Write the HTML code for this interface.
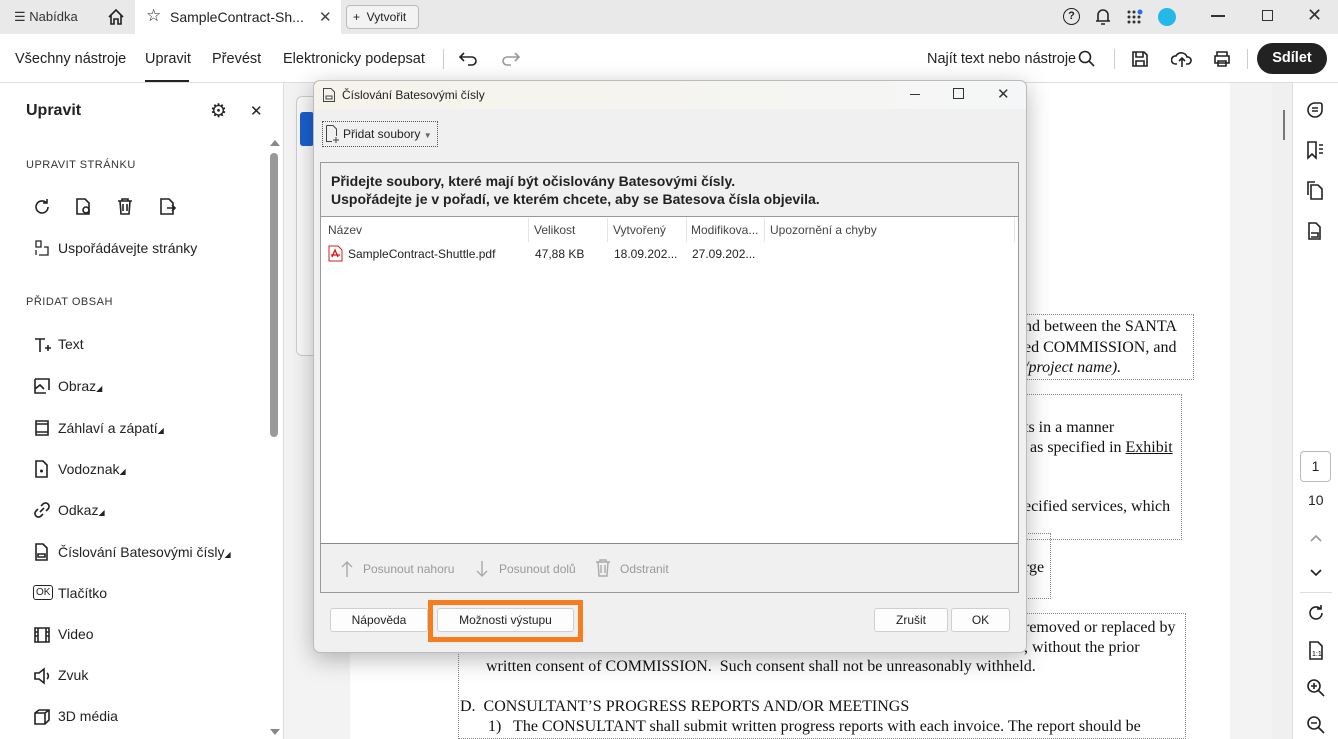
<!DOCTYPE html>
<html><head><meta charset="utf-8"><style>
*{box-sizing:border-box;margin:0;padding:0}
body{width:1338px;height:739px;overflow:hidden;position:relative;font-family:"Liberation Sans",sans-serif;color:#222;background:#fff}
.a{position:absolute}
.ser{font-family:"Liberation Serif",serif;font-size:16px;color:#111;white-space:nowrap}
.ic{fill:none;stroke:#222;stroke-width:1.6}
.li{position:absolute;left:58px;font-size:14px}
.lic{position:absolute;left:33px}
.sec{position:absolute;left:26px;font-size:11px;letter-spacing:.5px;color:#333}
.btn{position:absolute;background:#fdfdfd;border:1px solid #cfcfcf;border-radius:3px;font-size:12px;text-align:center;line-height:22px;height:24px}
</style></head><body>
<!-- top bar -->
<div class="a" style="left:0;top:0;width:1338px;height:34px;background:#e9e9e9"></div>
<div class="a" style="left:135px;top:0;width:206px;height:34px;background:#fff"></div>
<div class="a" style="left:14px;top:9px;font-size:13px;color:#333">☰ Nabídka</div>
<svg class="a" style="left:106px;top:8px" width="20" height="18"><path class="ic" d="M3 9 L10 2 L17 9 M5 7 V16 H8 V11 H12 V16 H15 V7"/></svg>
<div class="a" style="left:146px;top:6px;font-size:17px">☆</div>
<div class="a" style="left:170px;top:9px;font-size:14px">SampleContract-Sh...</div>
<div class="a" style="left:319px;top:8px;font-size:15px;color:#444">✕</div>
<div class="a" style="left:346px;top:5px;width:73px;height:24px;border:1px solid #bbb;border-radius:4px;font-size:12px;line-height:22px;padding-left:6px;background:#f3f3f3">+ &nbsp;Vytvořit</div>
<div class="a" style="left:1063px;top:8px;width:17px;height:17px;border:1.6px solid #222;border-radius:50%;font-size:11px;text-align:center;line-height:14px;font-weight:bold">?</div>
<svg class="a" style="left:1094px;top:7px" width="18" height="20"><path class="ic" d="M4 14 V8 a5 5 0 0 1 10 0 V14 H2 H16 M7 17 H11"/></svg>
<svg class="a" style="left:1126px;top:9px" width="18" height="16"><g fill="#333"><circle cx="3" cy="3" r="1.5"/><circle cx="8" cy="3" r="1.5"/><circle cx="3" cy="8" r="1.5"/><circle cx="8" cy="8" r="1.5"/><circle cx="13" cy="8" r="1.5"/><circle cx="3" cy="13" r="1.5"/><circle cx="8" cy="13" r="1.5"/><circle cx="13" cy="13" r="1.5"/></g><circle cx="14" cy="3" r="2.5" fill="#2a6fe0"/></svg>
<div class="a" style="left:1158px;top:8px;width:18px;height:18px;border-radius:50%;background:#22b8e8"></div>
<div class="a" style="left:1211px;top:15px;width:14px;height:1.5px;background:#333"></div>
<div class="a" style="left:1262px;top:10px;width:11px;height:11px;border:1.5px solid #333"></div>
<div class="a" style="left:1307px;top:5px;font-size:18px;color:#333">✕</div>
<!-- toolbar -->
<div class="a" style="left:0;top:82px;width:1338px;height:1px;background:#ddd"></div>
<div class="a" style="left:15px;top:51px;font-size:14.5px">Všechny nástroje</div>
<div class="a" style="left:145px;top:51px;font-size:14.5px">Upravit</div>
<div class="a" style="left:145px;top:80px;width:44px;height:2px;background:#222"></div>
<div class="a" style="left:212px;top:51px;font-size:14.5px">Převést</div>
<div class="a" style="left:283px;top:51px;font-size:14.5px">Elektronicky podepsat</div>
<div class="a" style="left:443px;top:49px;width:1px;height:20px;background:#ccc"></div>
<svg class="a" style="left:458px;top:50px" width="22" height="18"><path class="ic" d="M6 3 L2 7 L6 11 M2 7 H14 a4 4 0 0 1 0 8 H10"/></svg>
<svg class="a" style="left:499px;top:50px" width="22" height="18"><path fill="none" stroke="#999" stroke-width="1.6" d="M16 3 L20 7 L16 11 M20 7 H8 a4 4 0 0 0 0 8 H12"/></svg>
<div class="a" style="left:927px;top:51px;font-size:14.5px">Najít text nebo nástroje</div>
<svg class="a" style="left:1078px;top:50px" width="18" height="18"><circle class="ic" cx="7" cy="7" r="5.5"/><path class="ic" d="M11 11 L16 16"/></svg>
<div class="a" style="left:1114px;top:49px;width:1px;height:20px;background:#ccc"></div>
<svg class="a" style="left:1131px;top:50px" width="18" height="18"><path class="ic" d="M2 2 H13 L16 5 V16 H2 Z M5 2 V7 H12 V2 M5 16 V11 H13 V16"/></svg>
<svg class="a" style="left:1171px;top:49px" width="22" height="20"><path class="ic" d="M6 15 H4 a4 4 0 0 1 1 -8 a6 6 0 0 1 11 1 a3.5 3.5 0 0 1 1 7 H15 M11 18 V9 M8 12 L11 9 L14 12"/></svg>
<svg class="a" style="left:1212px;top:50px" width="20" height="18"><path class="ic" d="M5 6 V2 H15 V6 M3 6 H17 V13 H3 Z M6 11 H14 V16 H6 Z"/></svg>
<div class="a" style="left:1247px;top:49px;width:1px;height:20px;background:#ccc"></div>
<div class="a" style="left:1257px;top:43px;width:70px;height:31px;border-radius:16px;background:#222;color:#fff;font-weight:bold;font-size:14.5px;text-align:center;line-height:31px">Sdílet</div>
<!-- left panel -->
<div class="a" style="left:283px;top:83px;width:1px;height:656px;background:#ddd"></div>
<div class="a" style="left:26px;top:102px;font-size:16px;font-weight:bold">Upravit</div>
<div class="a" style="left:210px;top:100px;font-size:19px">⚙</div>
<div class="a" style="left:250px;top:102px;font-size:15px">✕</div>
<div class="a" style="left:270px;top:140px;width:0;height:0;border:5px solid transparent;border-bottom:6px solid #888;border-top:0"></div>
<div class="a" style="left:270px;top:153px;width:8px;height:284px;background:#999;border-radius:4px"></div>
<div class="a" style="left:270px;top:729px;width:0;height:0;border:5px solid transparent;border-top:6px solid #888;border-bottom:0"></div>
<div class="sec" style="top:159px">UPRAVIT STRÁNKU</div>
<svg class="a" style="left:32px;top:197px" width="20" height="20"><path class="ic" d="M16 10 a6 6 0 1 1 -2 -4.5 M15 2 V6 H11"/></svg>
<svg class="a" style="left:74px;top:197px" width="20" height="20"><path class="ic" d="M3 2 H11 L15 6 V17 H3 Z"/><circle class="ic" cx="12" cy="13" r="3"/></svg>
<svg class="a" style="left:116px;top:197px" width="18" height="20"><path class="ic" d="M2 4 H16 M6 4 V2 H12 V4 M4 4 L5 17 H13 L14 4 M7 7 V14 M11 7 V14"/></svg>
<svg class="a" style="left:158px;top:197px" width="20" height="20"><path class="ic" d="M3 2 H11 L15 6 V17 H3 Z M9 11 H17 M14 8 L17 11 L14 14"/></svg>
<svg class="lic" style="top:239px" width="18" height="18"><path fill="none" stroke="#222" stroke-width="1.3" d="M3 2 H8 V8 H3 Z M3 11 V16 M6 16 H15 V8 H11"/></svg>
<div class="li" style="top:240px">Uspořádávejte stránky</div>
<div class="sec" style="top:296px">PŘIDAT OBSAH</div>
<svg class="lic" style="top:336px" width="20" height="18"><path class="ic" d="M2 3 H12 M7 3 V16 M12 12 H18 M15 9 V15"/></svg>
<div class="li" style="top:336px">Text</div>
<svg class="lic" style="top:377px" width="18" height="18"><path class="ic" d="M2 2 H16 V13 M13 16 H2 V2 M2 12 L7 8 L11 12 M14 14 v0"/></svg>
<div class="li" style="top:378px">Obraz<span style="font-size:8px">◢</span></div>
<svg class="lic" style="top:419px" width="18" height="18"><path class="ic" d="M3 2 H15 V16 H3 Z M3 5 H15 M3 13 H15"/></svg>
<div class="li" style="top:420px">Záhlaví a zápatí<span style="font-size:8px">◢</span></div>
<svg class="lic" style="top:460px" width="18" height="18"><path class="ic" d="M3 1 H10 L14 5 V17 H3 Z"/><circle cx="8.5" cy="11" r="1.5" fill="#222"/></svg>
<div class="li" style="top:461px">Vodoznak<span style="font-size:8px">◢</span></div>
<svg class="lic" style="top:501px" width="18" height="18"><path class="ic" d="M7 11 L11 7 M8 5 L10 3 a3 3 0 0 1 5 5 L13 10 M10 13 L8 15 a3 3 0 0 1 -5 -5 L5 8"/></svg>
<div class="li" style="top:502px">Odkaz<span style="font-size:8px">◢</span></div>
<svg class="lic" style="top:543px" width="18" height="18"><path class="ic" d="M3 1 H10 L14 5 V17 H3 Z M5 11 H12 V14 H5 Z"/></svg>
<div class="li" style="top:544px">Číslování Batesovými čísly<span style="font-size:8px">◢</span></div>
<div class="lic" style="top:585px;font-size:10px;border:1.3px solid #222;border-radius:3px;padding:1px 2px;line-height:11px">OK</div>
<div class="li" style="top:585px">Tlačítko</div>
<svg class="lic" style="top:626px" width="18" height="18"><path class="ic" d="M2 2 H16 V16 H2 Z M5 2 V16 M13 2 V16 M2 6 H5 M2 10 H5 M13 6 H16 M13 10 H16"/></svg>
<div class="li" style="top:626px">Video</div>
<svg class="lic" style="top:667px" width="18" height="18"><path class="ic" d="M2 6 H6 L11 2 V16 L6 12 H2 Z M14 6 a4 4 0 0 1 0 6"/></svg>
<div class="li" style="top:667px">Zvuk</div>
<svg class="lic" style="top:708px" width="18" height="18"><path class="ic" d="M2 5 L6 2 H16 V12 L12 16 H2 Z M2 5 H12 V16 M12 5 L16 2"/></svg>
<div class="li" style="top:708px">3D média</div>
<!-- doc area -->
<div class="a" style="left:284px;top:83px;width:988px;height:656px;background:#f3f3f3"></div>
<div class="a" style="left:350px;top:83px;width:880px;height:656px;background:#fff"></div>
<div class="a" style="left:296px;top:96px;width:40px;height:260px;border:1px solid #ccc;border-radius:6px;background:#fafafa"></div>
<div class="a" style="left:300px;top:112px;width:14px;height:34px;background:#1a5fd0;border-radius:3px"></div>
<div class="a" style="left:1272px;top:83px;width:20px;height:656px;background:#f0f0f0"></div>
<div class="a" style="left:1283px;top:110px;width:2px;height:30px;background:#777"></div>
<div class="a" style="left:1292px;top:83px;width:1px;height:656px;background:#ddd"></div>
<div class="a" style="left:1020px;top:314px;width:174px;height:66px;border:1px dotted #888"></div>
<div class="ser a" style="left:1024px;top:318px">nd between the SANTA</div>
<div class="ser a" style="left:1024px;top:339px">ed COMMISSION, and</div>
<div class="ser a" style="left:1024px;top:359px;font-style:italic">/project name).</div>
<div class="a" style="left:1020px;top:394px;width:162px;height:146px;border:1px dotted #888"></div>
<div class="ser a" style="left:1024px;top:419px">ts in a manner</div>
<div class="ser a" style="left:1030px;top:439px">as specified in <u>Exhibit</u></div>
<div class="ser a" style="left:1024px;top:498px">ecified services, which</div>
<div class="a" style="left:1020px;top:533px;width:31px;height:66px;border:1px dotted #888"></div>
<div class="ser a" style="left:1024px;top:559px">rge</div>
<div class="a" style="left:458px;top:613px;width:728px;height:126px;border:1px dotted #888"></div>
<div class="ser a" style="left:1024px;top:619px">removed or replaced by</div>
<div class="ser a" style="left:1024px;top:639px">, without the prior</div>
<div class="ser a" style="left:486px;top:658px">written consent of COMMISSION.&nbsp; Such consent shall not be unreasonably withheld.</div>
<div class="ser a" style="left:460px;top:698px">D.&nbsp; CONSULTANT’S PROGRESS REPORTS AND/OR MEETINGS</div>
<div class="ser a" style="left:488px;top:718px">1)&nbsp;&nbsp; The CONSULTANT shall submit written progress reports with each invoice. The report should be</div>
<!-- right rail -->
<svg class="a" style="left:1305px;top:100px" width="20" height="20"><path class="ic" d="M10 3 a7 7 0 1 0 7 7 V5 a2 2 0 0 0 -2 -2 Z M7 8 H13 M7 11 H13"/></svg>
<svg class="a" style="left:1305px;top:140px" width="20" height="20"><path class="ic" d="M3 2 H11 V18 L7 14 L3 18 Z M14 5 H18 M14 9 H18 M14 13 H18"/></svg>
<svg class="a" style="left:1305px;top:180px" width="20" height="20"><path class="ic" d="M6 5 H13 L17 9 V19 H6 Z M3 15 V2 H10"/></svg>
<svg class="a" style="left:1305px;top:221px" width="20" height="20"><path class="ic" d="M4 2 H11 L15 6 V18 H4 Z M6 12 H13 V16 H6"/></svg>
<div class="a" style="left:1300px;top:451px;width:31px;height:31px;border:1px solid #bbb;border-radius:4px;font-size:14px;text-align:center;line-height:29px">1</div>
<div class="a" style="left:1308px;top:492px;font-size:14px">10</div>
<svg class="a" style="left:1309px;top:533px" width="14" height="10"><path fill="none" stroke="#999" stroke-width="1.6" d="M2 8 L7 3 L12 8"/></svg>
<svg class="a" style="left:1309px;top:568px" width="14" height="10"><path class="ic" d="M2 2 L7 7 L12 2"/></svg>
<div class="a" style="left:1300px;top:592px;width:32px;height:1px;background:#ddd"></div>
<svg class="a" style="left:1306px;top:603px" width="20" height="20"><path class="ic" d="M16 10 a6 6 0 1 1 -2 -4.5 M15 2 V6 H11"/></svg>
<svg class="a" style="left:1306px;top:640px" width="22" height="22"><path class="ic" d="M4 2 H12 L16 6 V19 H4 Z"/><text x="6" y="16" font-size="7" font-family="Liberation Sans">1:1</text></svg>
<svg class="a" style="left:1306px;top:678px" width="20" height="20"><circle class="ic" cx="8" cy="8" r="6"/><path class="ic" d="M12.5 12.5 L18 18 M5 8 H11 M8 5 V11"/></svg>
<svg class="a" style="left:1306px;top:715px" width="20" height="20"><circle class="ic" cx="8" cy="8" r="6"/><path class="ic" d="M12.5 12.5 L18 18 M5 8 H11"/></svg>
<!-- dialog -->
<div class="a" style="left:313px;top:80px;width:714px;height:573px;background:#f0f0f0;border:1px solid #bbb;border-radius:7px;box-shadow:0 6px 24px rgba(0,0,0,.28)"></div>
<div class="a" style="left:314px;top:81px;width:712px;height:28px;background:linear-gradient(90deg,#f5f3ea,#f5f6f7);border-radius:7px 7px 0 0"></div>
<svg class="a" style="left:322px;top:87px" width="14" height="16"><path fill="none" stroke="#444" d="M1.5 1.5 H9 L12.5 5 V14.5 H1.5 Z M4 9 H10 V12 H4 Z"/></svg>
<div class="a" style="left:342px;top:88px;font-size:12px">Číslování Batesovými čísly</div>
<div class="a" style="left:910px;top:94px;width:10px;height:1px;background:#333"></div>
<div class="a" style="left:953px;top:88px;width:11px;height:11px;border:1px solid #333"></div>
<div class="a" style="left:997px;top:85px;font-size:15px;color:#333">✕</div>
<div class="a" style="left:322px;top:121px;width:116px;height:26px;border:1px dotted #555"></div>
<svg class="a" style="left:325px;top:124px" width="18" height="20"><path fill="none" stroke="#444" d="M1.5 1.5 H8 L11.5 5 V12 M7 17.5 H1.5 V1.5 M11 13 V19 M8 16 H14"/></svg>
<div class="a" style="left:343px;top:127px;font-size:12px">Přidat soubory <span style="font-size:8px;color:#666">▼</span></div>
<div class="a" style="left:320px;top:162px;width:699px;height:382px;background:#fff;border:1px solid #999"></div>
<div class="a" style="left:321px;top:163px;width:697px;height:54px;background:#f0f0f0;border-bottom:1px solid #999"></div>
<div class="a" style="left:331px;top:172px;font-size:14px;font-weight:bold;line-height:18px">Přidejte soubory, které mají být očislovány Batesovými čísly.<br>Uspořádejte je v pořadí, ve kterém chcete, aby se Batesova čísla objevila.</div>
<div class="a" style="left:321px;top:218px;width:697px;height:24px;font-size:12px;color:#444">
<span class="a" style="left:7px;top:5px">Název</span><span class="a" style="left:207px;top:0;width:1px;height:24px;background:#e5e5e5"></span>
<span class="a" style="left:213px;top:5px">Velikost</span><span class="a" style="left:286px;top:0;width:1px;height:24px;background:#e5e5e5"></span>
<span class="a" style="left:292px;top:5px">Vytvořený</span><span class="a" style="left:365px;top:0;width:1px;height:24px;background:#e5e5e5"></span>
<span class="a" style="left:370px;top:5px">Modifikova...</span><span class="a" style="left:443px;top:0;width:1px;height:24px;background:#e5e5e5"></span>
<span class="a" style="left:449px;top:5px">Upozornění a chyby</span><span class="a" style="left:693px;top:0;width:1px;height:24px;background:#e5e5e5"></span>
</div>
<svg class="a" style="left:328px;top:245px" width="15" height="17"><path d="M1 1 H10 L14 5 V16 H1 Z" fill="#fff" stroke="#c22"/><path d="M4 12 L7 5 L10 12 M3 10 H12" fill="none" stroke="#d11" stroke-width="1.3"/></svg>
<div class="a" style="left:348px;top:247px;font-size:12px">SampleContract-Shuttle.pdf</div>
<div class="a" style="left:535px;top:247px;font-size:12px">47,88 KB</div>
<div class="a" style="left:614px;top:247px;font-size:12px">18.09.202...</div>
<div class="a" style="left:692px;top:247px;font-size:12px">27.09.202...</div>
<div class="a" style="left:320px;top:543px;width:699px;height:50px;background:#f0f0f0;border:1px solid #999;border-top:1px solid #888"></div>
<svg class="a" style="left:340px;top:560px" width="14" height="18"><path fill="none" stroke="#aaa" stroke-width="1.4" d="M7 17 V2 M2 7 L7 2 L12 7"/></svg>
<div class="a" style="left:363px;top:562px;font-size:12px;color:#999">Posunout nahoru</div>
<svg class="a" style="left:475px;top:560px" width="14" height="18"><path fill="none" stroke="#aaa" stroke-width="1.4" d="M7 1 V16 M2 11 L7 16 L12 11"/></svg>
<div class="a" style="left:499px;top:562px;font-size:12px;color:#999">Posunout dolů</div>
<svg class="a" style="left:595px;top:559px" width="16" height="18"><path fill="none" stroke="#aaa" stroke-width="1.4" d="M1 3 H15 M5 3 V1 H11 V3 M3 3 L4 17 H12 L13 3 M6 6 V14 M10 6 V14"/></svg>
<div class="a" style="left:620px;top:562px;font-size:12px;color:#999">Odstranit</div>
<div class="btn" style="left:330px;top:608px;width:98px">Nápověda</div>
<div class="a" style="left:428px;top:600px;width:155px;height:42px;border:5px solid #f57c1f"></div>
<div class="btn" style="left:437px;top:608px;width:137px">Možnosti výstupu</div>
<div class="btn" style="left:874px;top:608px;width:74px">Zrušit</div>
<div class="btn" style="left:951px;top:608px;width:59px">OK</div>
</body></html>
